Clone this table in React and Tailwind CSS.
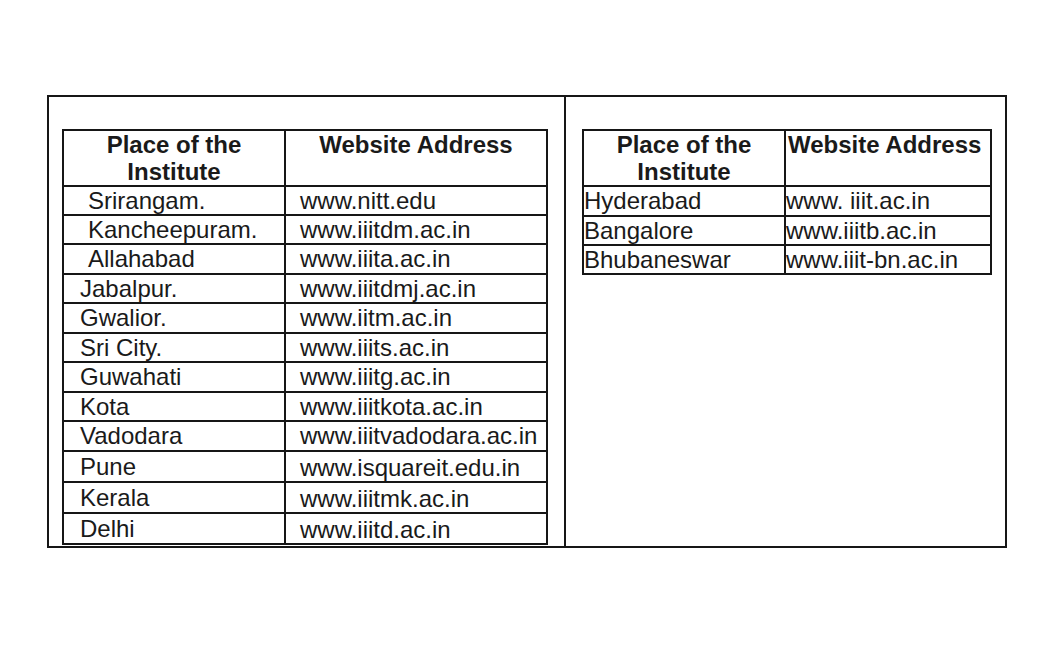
const leftRows = [
    { place: 'Srirangam.', site: 'www.nitt.edu', h: 'h-[29px]', indent: true },
    { place: 'Kancheepuram.', site: 'www.iiitdm.ac.in', h: 'h-[29px]', indent: true },
    { place: 'Allahabad', site: 'www.iiita.ac.in', h: 'h-[30px]', indent: true },
    { place: 'Jabalpur.', site: 'www.iiitdmj.ac.in', h: 'h-[29px]' },
    { place: 'Gwalior.', site: 'www.iitm.ac.in', h: 'h-[30px]' },
    { place: 'Sri City.', site: 'www.iiits.ac.in', h: 'h-[29px]' },
    { place: 'Guwahati', site: 'www.iiitg.ac.in', h: 'h-[30px]' },
    { place: 'Kota', site: 'www.iiitkota.ac.in', h: 'h-[29px]' },
    { place: 'Vadodara', site: 'www.iiitvadodara.ac.in', h: 'h-[30px]' },
    { place: 'Pune', site: 'www.isquareit.edu.in', h: 'h-[31px]', low: true },
    { place: 'Kerala', site: 'www.iiitmk.ac.in', h: 'h-[31px]', low: true },
    { place: 'Delhi', site: 'www.iiitd.ac.in', h: 'h-[31px]', low: true },
];

const rightRows = [
    { place: 'Hyderabad', site: 'www. iiit.ac.in', h: 'h-[30px]' },
    { place: 'Bangalore', site: 'www.iiitb.ac.in', h: 'h-[29px]' },
    { place: 'Bhubaneswar', site: 'www.iiit-bn.ac.in', h: 'h-[29px]' },
];

const cell = 'border-r-2 border-b-2 border-[#161616] flex items-center';

function LeftTable() {
    return (
        <div className="w-[486px] border-l-2 border-t-2 border-[#161616]">
            <div className="flex h-[56px]">
                <div className="w-[222px] border-r-2 border-b-2 border-[#161616] text-center font-bold leading-[27px]">
                    Place of the
                    <br />
                    Institute
                </div>
                <div className="flex-1 border-r-2 border-b-2 border-[#161616] text-center font-bold leading-[27px]">
                    Website Address
                </div>
            </div>
            {leftRows.map((r) => (
                <div key={r.place} className={`flex ${r.h}`}>
                    <div className={`w-[222px] ${cell} ${r.indent ? 'pl-[24px]' : 'pl-[16px]'}`}>
                        {r.place}
                    </div>
                    <div className={`flex-1 ${cell} pl-[14px] ${r.low ? 'pt-[2px]' : ''}`}>
                        {r.site}
                    </div>
                </div>
            ))}
        </div>
    );
}

function RightTable() {
    return (
        <div className="w-[410px] border-l-2 border-t-2 border-[#161616]">
            <div className="flex h-[56px]">
                <div className="w-[202px] border-r-2 border-b-2 border-[#161616] text-center font-bold leading-[27px]">
                    Place of the
                    <br />
                    Institute
                </div>
                <div className="flex-1 border-r-2 border-b-2 border-[#161616] pl-[2px] font-bold leading-[27px] whitespace-nowrap">
                    Website Address
                </div>
            </div>
            {rightRows.map((r) => (
                <div key={r.place} className={`flex ${r.h}`}>
                    <div className={`w-[202px] ${cell}`}>{r.place}</div>
                    <div className={`flex-1 ${cell} whitespace-pre`}>{r.site}</div>
                </div>
            ))}
        </div>
    );
}

export default function App() {
    return (
        <div
            className="w-[1050px] h-[650px] bg-white pt-[95px] pl-[47px] text-[24px] text-[#1a1a1a]"
            style={{ fontFamily: '"Liberation Sans", Arial, sans-serif' }}
        >
            <div className="w-[960px] h-[453px] border-2 border-[#161616] flex">
                <div className="w-[517px] border-r-2 border-[#161616] pl-[13px] pt-[32px]">
                    <LeftTable />
                </div>
                <div className="flex-1 pl-[16px] pt-[32px]">
                    <RightTable />
                </div>
            </div>
        </div>
    );
}
